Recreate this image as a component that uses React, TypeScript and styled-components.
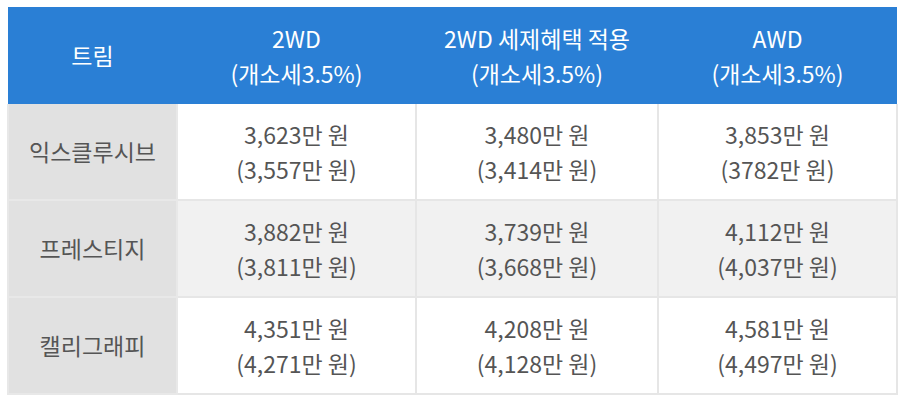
import { createGlobalStyle } from 'styled-components';
import styled from 'styled-components';

const GlobalStyle = createGlobalStyle`
  html, body {
    margin: 0;
    padding: 0;
    background: #ffffff;
  }
  body {
    font-family: 'Noto Sans CJK KR', 'Noto Sans', sans-serif;
  }
`;

const Page = styled.div`
  padding: 7px;
`;

const PriceTable = styled.table`
  width: 889px;
  table-layout: fixed;
  border-collapse: collapse;
  font-size: 23px;
  line-height: 35px;
`;

const HeadCell = styled.th`
  height: 97px;
  padding: 0;
  background: #2a7fd5;
  color: #ffffff;
  font-weight: 400;
  text-align: center;
  vertical-align: middle;
`;

const TrimCell = styled.td`
  height: 95px;
  padding: 0;
  background: #e1e1e1;
  color: #555555;
  text-align: center;
  border: 2px solid #e8e8e8;
  border-top: none;
`;

const PriceCell = styled.td<{ $shade: boolean }>`
  height: 95px;
  padding: 0;
  background: ${(p) => (p.$shade ? '#f1f1f1' : '#ffffff')};
  color: #555555;
  text-align: center;
  border: 2px solid #e6e6e6;
  border-top: none;
`;

const Line = styled.div`
  white-space: nowrap;
`;

const headers = [
  { title: '2WD', sub: '(개소세3.5%)' },
  { title: '2WD 세제혜택 적용', sub: '(개소세3.5%)' },
  { title: 'AWD', sub: '(개소세3.5%)' },
];

const rows = [
  {
    trim: '익스클루시브',
    prices: [
      ['3,623만 원', '(3,557만 원)'],
      ['3,480만 원', '(3,414만 원)'],
      ['3,853만 원', '(3782만 원)'],
    ],
  },
  {
    trim: '프레스티지',
    prices: [
      ['3,882만 원', '(3,811만 원)'],
      ['3,739만 원', '(3,668만 원)'],
      ['4,112만 원', '(4,037만 원)'],
    ],
  },
  {
    trim: '캘리그래피',
    prices: [
      ['4,351만 원', '(4,271만 원)'],
      ['4,208만 원', '(4,128만 원)'],
      ['4,581만 원', '(4,497만 원)'],
    ],
  },
];

const App = () => {
  return (
    <Page>
      <GlobalStyle />
      <PriceTable>
        <colgroup>
          <col style={{ width: 169 }} />
          <col style={{ width: 239 }} />
          <col style={{ width: 242 }} />
          <col style={{ width: 239 }} />
        </colgroup>
        <thead>
          <tr>
            <HeadCell>트림</HeadCell>
            {headers.map((h) => (
              <HeadCell key={h.title}>
                <Line>{h.title}</Line>
                <Line>{h.sub}</Line>
              </HeadCell>
            ))}
          </tr>
        </thead>
        <tbody>
          {rows.map((row, i) => (
            <tr key={row.trim}>
              <TrimCell>{row.trim}</TrimCell>
              {row.prices.map(([main, sub]) => (
                <PriceCell key={main} $shade={i === 1}>
                  <Line>{main}</Line>
                  <Line>{sub}</Line>
                </PriceCell>
              ))}
            </tr>
          ))}
        </tbody>
      </PriceTable>
    </Page>
  );
};

export default App;
